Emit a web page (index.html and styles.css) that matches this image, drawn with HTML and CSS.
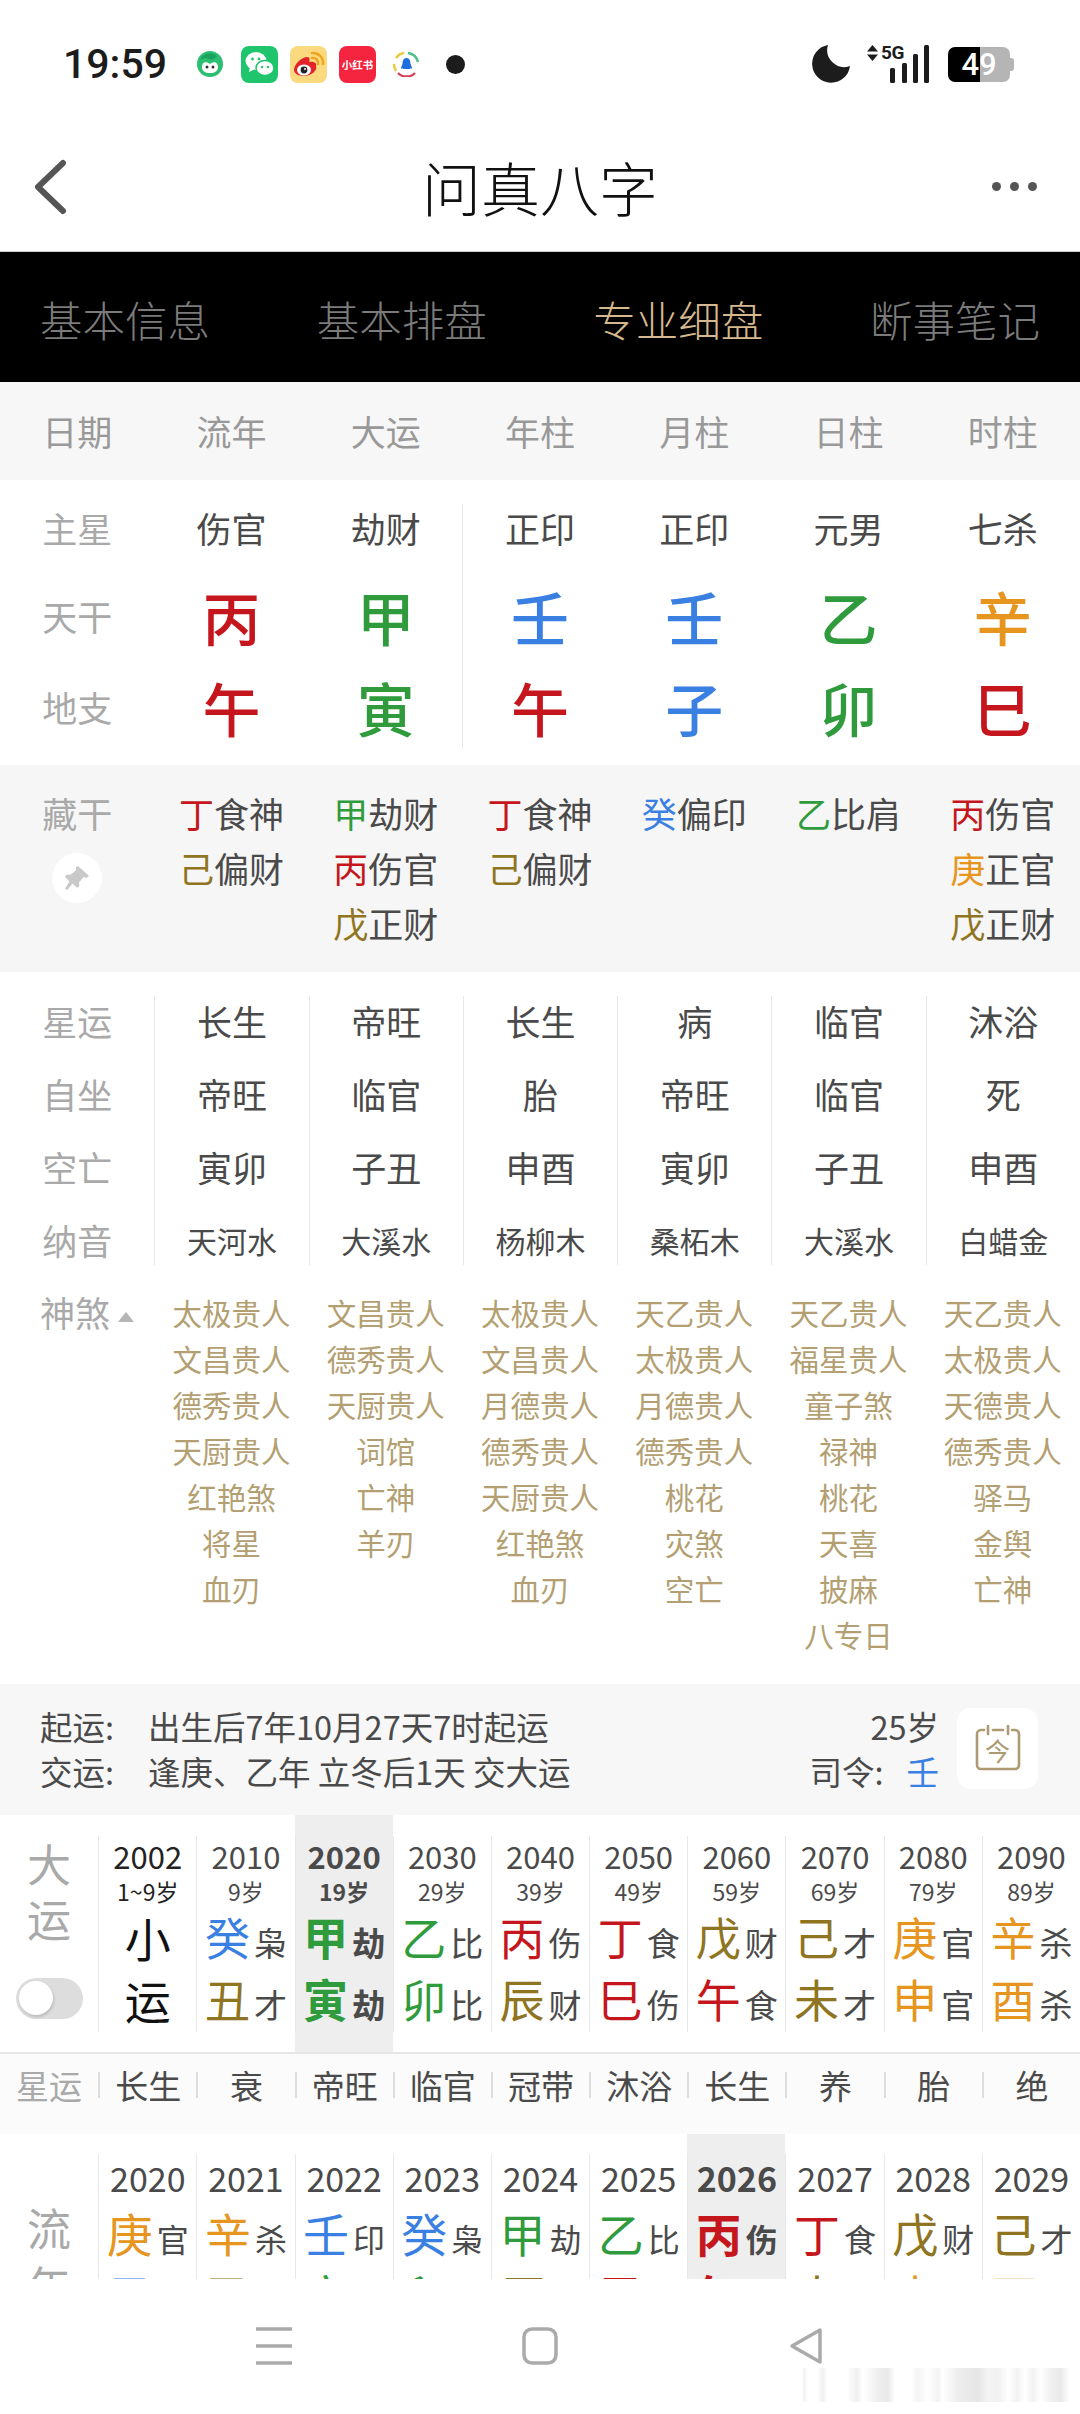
FILE: index.html
```html
<!DOCTYPE html>
<html>
	<head>
		<meta http-equiv="Content-Type" content="text/html; charset=UTF-8" />
		<meta name="viewport" content="initial-scale=1.0">
		<title>问真八字</title>
		<link rel="stylesheet" href="styles.css">
	</head>
	<body>
		<div class="status-bar">
			<span class="status-time">19:59</span>
			<div class="status-apps">
				<svg class="app-s" viewBox="0 0 26 26"><circle cx="13" cy="13" r="13" fill="#2cbf72"/><path d="M3 9a10.500 10.500 0 0 1 17-4c-2 3-5 4-8 3-3-1-6-1-9 1z" fill="#1aa35f"/><path d="M5 16c0-5 4-6 8-3 4-3 8-2 8 3 0 4-3 6-8 6s-8-2-8-6z" fill="#fff"/><circle cx="10" cy="16" r="1.500" fill="#333"/><circle cx="16" cy="16" r="1.500" fill="#333"/></svg>
				<svg class="app-b" viewBox="0 0 37 37"><rect width="37" height="37" rx="8" fill="#1fc56c"/><ellipse cx="15" cy="15" rx="10.500" ry="9" fill="#fff"/><path d="M9 21l-1 5 6-3z" fill="#fff"/><ellipse cx="24" cy="22" rx="9" ry="7.500" fill="#fff" stroke="#1fc56c" stroke-width="1.500"/><circle cx="11.500" cy="13" r="1.400" fill="#1fc56c"/><circle cx="18" cy="13" r="1.400" fill="#1fc56c"/><circle cx="21" cy="21" r="1.200" fill="#1fc56c"/><circle cx="27" cy="21" r="1.200" fill="#1fc56c"/></svg>
				<svg class="app-b" viewBox="0 0 37 37"><rect width="37" height="37" rx="8" fill="#fbd97f"/><path d="M22 7a10 10 0 0 1 11 11M22 12a5 5 0 0 1 6 6" fill="none" stroke="#f0a41e" stroke-width="2.400" stroke-linecap="round"/><path d="M4 24c0-6 8-13 13-13 3 0 3 3 2 5 5-1 8 1 7 4 2 5-6 10-12 10-6 0-10-3-10-6z" fill="#e4242b"/><ellipse cx="14" cy="24" rx="7" ry="5.500" fill="#fff"/><circle cx="14" cy="24" r="3.400" fill="#222"/><circle cx="15" cy="23" r="1" fill="#fff"/></svg>
				<div class="app-red">小红书</div>
				<svg class="app-s app-news" viewBox="0 0 29 26"><path d="M4 7a12 12 0 0 1 8-5" fill="none" stroke="#e9c93c" stroke-width="2.400"/><path d="M2 13a12 12 0 0 0 2 7" fill="none" stroke="#e9c93c" stroke-width="2.400"/><path d="M16 2a12 12 0 0 1 10 9" fill="none" stroke="#4fc08d" stroke-width="2.400"/><path d="M6 22a12 12 0 0 0 17 0" fill="none" stroke="#d8405a" stroke-width="2.400"/><path d="M14.500 7c3 0 4 3 4 6 1 2 2 4 1 5-1-1-1-1-2 0h-6c-1-1-1-1-2 0-1-1 0-3 1-5 0-3 1-6 4-6z" fill="#1d6fe0"/></svg>
				<span class="status-dot"></span>
			</div>
			<div class="status-right">
				<svg class="ico-moon" viewBox="0 0 38 38"><path d="M16 0A19 19 0 1 0 38 21 17 17 0 0 1 16 0Z" fill="#1c1c1c"/></svg>
				<div class="signal">
					<svg class="signal-arrows" viewBox="0 0 11 16"><path d="M5.500 0L11 6.500H0zM5.500 16L0 9.500H11z" fill="#1c1c1c"/></svg>
					<span class="signal-5g">5G</span>
					<svg class="signal-bars" viewBox="0 0 40 38"><rect x="0" y="23" width="5" height="15" rx="1.500"/><rect x="12" y="18" width="5" height="20" rx="1.500"/><rect x="23" y="9" width="5" height="29" rx="1.500"/><rect x="34" y="0" width="5" height="38" rx="1.500"/></svg>
				</div>
				<div class="battery">49</div>
			</div>
		</div>

		<div class="title-bar">
			<svg class="ico-back" viewBox="0 0 34 56"><path d="M30 4L5 28 30 52" fill="none" stroke="#555" stroke-width="6" stroke-linecap="round" stroke-linejoin="round"/></svg>
			<span class="title-txt">问真八字</span>
			<div class="title-more"><i></i><i></i><i></i></div>
		</div>

		<div class="tab-bar">
			<span>基本信息</span>
			<span>基本排盘</span>
			<span class="tab-on">专业细盘</span>
			<span>断事笔记</span>
		</div>

		<div class="cols head-row">
			<span>日期</span><span>流年</span><span>大运</span><span>年柱</span><span>月柱</span><span>日柱</span><span>时柱</span>
		</div>

		<div class="cols main-rows">
			<span class="lbl">主星</span><span>伤官</span><span>劫财</span><span>正印</span><span>正印</span><span>元男</span><span>七杀</span>
			<span class="lbl">天干</span><b class="fire">丙</b><b class="wood">甲</b><b class="water">壬</b><b class="water">壬</b><b class="wood">乙</b><b class="metal">辛</b>
			<span class="lbl">地支</span><b class="fire">午</b><b class="wood">寅</b><b class="fire">午</b><b class="water">子</b><b class="wood">卯</b><b class="fire">巳</b>
		</div>

		<div class="cols hide-rows">
			<div class="lbl">
				藏干
				<div class="pin-btn">
					<svg viewBox="0 0 24 24"><path d="M13 1l10 9-2 2-3-1-4 5 0 4-2 1-4-4-5 6-2-1 4-7-4-4 1-2 4 0 5-4 0-3z" fill="#c9c9c9"/></svg>
				</div>
			</div>
			<div><p><em class="fire">丁</em>食神</p><p><em class="earth">己</em>偏财</p></div>
			<div><p><em class="wood">甲</em>劫财</p><p><em class="fire">丙</em>伤官</p><p><em class="earth">戊</em>正财</p></div>
			<div><p><em class="fire">丁</em>食神</p><p><em class="earth">己</em>偏财</p></div>
			<div><p><em class="water">癸</em>偏印</p></div>
			<div><p><em class="wood">乙</em>比肩</p></div>
			<div><p><em class="fire">丙</em>伤官</p><p><em class="metal">庚</em>正官</p><p><em class="earth">戊</em>正财</p></div>
		</div>

		<div class="cols star-rows">
			<div class="lbl"><p>星运</p><p>自坐</p><p>空亡</p><p>纳音</p></div>
			<div class="star-col"><p>长生</p><p>帝旺</p><p>寅卯</p><p class="nayin">天河水</p></div>
			<div class="star-col"><p>帝旺</p><p>临官</p><p>子丑</p><p class="nayin">大溪水</p></div>
			<div class="star-col"><p>长生</p><p>胎</p><p>申酉</p><p class="nayin">杨柳木</p></div>
			<div class="star-col"><p>病</p><p>帝旺</p><p>寅卯</p><p class="nayin">桑柘木</p></div>
			<div class="star-col"><p>临官</p><p>临官</p><p>子丑</p><p class="nayin">大溪水</p></div>
			<div class="star-col"><p>沐浴</p><p>死</p><p>申酉</p><p class="nayin">白蜡金</p></div>
		</div>

		<div class="cols sha-rows">
			<div class="lbl sha-lbl">神煞<i class="sha-up"></i></div>
			<div><p>太极贵人</p><p>文昌贵人</p><p>德秀贵人</p><p>天厨贵人</p><p>红艳煞</p><p>将星</p><p>血刃</p></div>
			<div><p>文昌贵人</p><p>德秀贵人</p><p>天厨贵人</p><p>词馆</p><p>亡神</p><p>羊刃</p></div>
			<div><p>太极贵人</p><p>文昌贵人</p><p>月德贵人</p><p>德秀贵人</p><p>天厨贵人</p><p>红艳煞</p><p>血刃</p></div>
			<div><p>天乙贵人</p><p>太极贵人</p><p>月德贵人</p><p>德秀贵人</p><p>桃花</p><p>灾煞</p><p>空亡</p></div>
			<div><p>天乙贵人</p><p>福星贵人</p><p>童子煞</p><p>禄神</p><p>桃花</p><p>天喜</p><p>披麻</p><p>八专日</p></div>
			<div><p>天乙贵人</p><p>太极贵人</p><p>天德贵人</p><p>德秀贵人</p><p>驿马</p><p>金舆</p><p>亡神</p></div>
		</div>

		<div class="yun-info">
			<div class="yun-info-left">
				<p><span class="yun-key">起运:</span>出生后7年10月27天7时起运</p>
				<p><span class="yun-key">交运:</span>逢庚、乙年 立冬后1天 交大运</p>
			</div>
			<div class="yun-info-right">
				<p>25岁</p>
				<p>司令:<span class="water siling">壬</span></p>
			</div>
			<div class="today-btn">
				<svg viewBox="0 0 46 46"><path d="M9 5H6a4 4 0 0 0-4 4v31a4 4 0 0 0 4 4h34a4 4 0 0 0 4-4V9a4 4 0 0 0-4-4h-3M18 5h10M13 1v8M33 1v8" fill="none" stroke="#ad9a72" stroke-width="2.600" stroke-linecap="round"/></svg>
				<span class="today-txt">今</span>
			</div>
		</div>

		<div class="yun-table">
			<div class="yun-col">
				<div class="yun-side">
					<span>大</span><span>运</span>
					<div class="toggle"><i></i></div>
				</div>
			</div>
			<div class="yun-col"><div class="yun-in"><div class="yr yr-first">2002</div><div class="age yr-first">1~9岁</div><div class="gz gz-first">小</div><div class="gz gz-first">运</div></div></div>
			<div class="yun-col"><div class="yun-in"><div class="yr">2010</div><div class="age">9岁</div><div class="gz"><em class="water">癸</em><small>枭</small></div><div class="gz"><em class="earth">丑</em><small>才</small></div></div></div>
			<div class="yun-col col-on"><div class="yun-in"><div class="yr">2020</div><div class="age">19岁</div><div class="gz"><em class="wood">甲</em><small>劫</small></div><div class="gz"><em class="wood">寅</em><small>劫</small></div></div></div>
			<div class="yun-col"><div class="yun-in"><div class="yr">2030</div><div class="age">29岁</div><div class="gz"><em class="wood">乙</em><small>比</small></div><div class="gz"><em class="wood">卯</em><small>比</small></div></div></div>
			<div class="yun-col"><div class="yun-in"><div class="yr">2040</div><div class="age">39岁</div><div class="gz"><em class="fire">丙</em><small>伤</small></div><div class="gz"><em class="earth">辰</em><small>财</small></div></div></div>
			<div class="yun-col"><div class="yun-in"><div class="yr">2050</div><div class="age">49岁</div><div class="gz"><em class="fire">丁</em><small>食</small></div><div class="gz"><em class="fire">巳</em><small>伤</small></div></div></div>
			<div class="yun-col"><div class="yun-in"><div class="yr">2060</div><div class="age">59岁</div><div class="gz"><em class="earth">戊</em><small>财</small></div><div class="gz"><em class="fire">午</em><small>食</small></div></div></div>
			<div class="yun-col"><div class="yun-in"><div class="yr">2070</div><div class="age">69岁</div><div class="gz"><em class="earth">己</em><small>才</small></div><div class="gz"><em class="earth">未</em><small>才</small></div></div></div>
			<div class="yun-col"><div class="yun-in"><div class="yr">2080</div><div class="age">79岁</div><div class="gz"><em class="metal">庚</em><small>官</small></div><div class="gz"><em class="metal">申</em><small>官</small></div></div></div>
			<div class="yun-col"><div class="yun-in"><div class="yr">2090</div><div class="age">89岁</div><div class="gz"><em class="metal">辛</em><small>杀</small></div><div class="gz"><em class="metal">酉</em><small>杀</small></div></div></div>
		</div>

		<div class="yun-strip">
			<span class="strip-lbl">星运</span><span>长生</span><span>衰</span><span>帝旺</span><span>临官</span><span>冠带</span><span>沐浴</span><span>长生</span><span>养</span><span>胎</span><span>绝</span>
		</div>

		<div class="yun-table year-table">
			<div class="yun-col">
				<div class="yun-side year-side"><span>流</span><span>年</span></div>
			</div>
			<div class="yun-col"><div class="yun-in"><div class="yr">2020</div><div class="gz"><em class="metal">庚</em><small>官</small></div><div class="gz"><em class="water">子</em><small>枭</small></div></div></div>
			<div class="yun-col"><div class="yun-in"><div class="yr">2021</div><div class="gz"><em class="metal">辛</em><small>杀</small></div><div class="gz"><em class="earth">丑</em><small>才</small></div></div></div>
			<div class="yun-col"><div class="yun-in"><div class="yr">2022</div><div class="gz"><em class="water">壬</em><small>印</small></div><div class="gz"><em class="wood">寅</em><small>劫</small></div></div></div>
			<div class="yun-col"><div class="yun-in"><div class="yr">2023</div><div class="gz"><em class="water">癸</em><small>枭</small></div><div class="gz"><em class="wood">卯</em><small>比</small></div></div></div>
			<div class="yun-col"><div class="yun-in"><div class="yr">2024</div><div class="gz"><em class="wood">甲</em><small>劫</small></div><div class="gz"><em class="earth">辰</em><small>财</small></div></div></div>
			<div class="yun-col"><div class="yun-in"><div class="yr">2025</div><div class="gz"><em class="wood">乙</em><small>比</small></div><div class="gz"><em class="fire">巳</em><small>伤</small></div></div></div>
			<div class="yun-col col-on"><div class="yun-in"><div class="yr">2026</div><div class="gz"><em class="fire">丙</em><small>伤</small></div><div class="gz"><em class="fire">午</em><small>食</small></div></div></div>
			<div class="yun-col"><div class="yun-in"><div class="yr">2027</div><div class="gz"><em class="fire">丁</em><small>食</small></div><div class="gz"><em class="earth">未</em><small>才</small></div></div></div>
			<div class="yun-col"><div class="yun-in"><div class="yr">2028</div><div class="gz"><em class="earth">戊</em><small>财</small></div><div class="gz"><em class="metal">申</em><small>官</small></div></div></div>
			<div class="yun-col"><div class="yun-in"><div class="yr">2029</div><div class="gz"><em class="earth">己</em><small>才</small></div><div class="gz"><em class="metal">酉</em><small>杀</small></div></div></div>
		</div>

		<div class="nav-bar">
			<svg viewBox="0 0 38 38"><path d="M1 2H37M1 19H37M1 36H37" stroke="#aaa" stroke-width="3.500" fill="none"/></svg>
			<svg viewBox="0 0 38 38"><rect x="3" y="2" width="32" height="34" rx="8" fill="none" stroke="#aaa" stroke-width="3.500"/></svg>
			<svg viewBox="0 0 38 38"><path d="M32 3L4 19 32 35Z" fill="none" stroke="#aaa" stroke-width="3.500" stroke-linejoin="round"/></svg>
			<div class="nav-smudge"></div>
		</div>
	</body>
</html>
```

FILE: styles.css
```css
html, body { margin: 0; padding: 0; }
body {
	width: 1080px;
	height: 2414px;
	overflow: hidden;
	background-color: white;
	font: 35px/1.2 "Noto Sans CJK SC", sans-serif;
	color: #4a4a4a;
}
p { margin: 0; }
em, i { font-style: normal; }

.fire  { color: #c4161c; }
.wood  { color: #2f9b3c; }
.water { color: #3a80e2; }
.metal { color: #e6951f; }
.earth { color: #8f7421; }

/* status bar */
.status-bar {
	display: flex;
	align-items: center;
	height: 120px;
	padding: 4px 0 0 63px;
	box-sizing: content-box;
}
.status-time {
	width: 134px;
	font: 500 41px Roboto, sans-serif;
	color: #1c1c1c;
}
.status-apps {
	display: flex;
	align-items: center;
}
.app-s { width: 26px; height: 26px; margin-right: 18px; }
.app-b { width: 37px; height: 37px; margin-right: 12px; }
.app-news { width: 29px; margin: 0 25px 0 4px; }
.app-red {
	width: 37px;
	height: 37px;
	margin-right: 12px;
	border-radius: 8px;
	background-color: #f5253f;
	color: white;
	font-size: 10.500px;
	font-weight: bold;
	line-height: 37px;
	text-align: center;
	white-space: nowrap;
}
.status-dot {
	width: 19px;
	height: 19px;
	border-radius: 50%;
	background-color: #1c1c1c;
}
.status-right {
	display: flex;
	align-items: center;
	margin-left: auto;
	padding-right: 70px;
}
.ico-moon { width: 38px; height: 38px; margin-right: 17px; }
.signal {
	position: relative;
	width: 63px;
	height: 38px;
	margin-right: 18px;
}
.signal-arrows { position: absolute; left: 0; top: 0; width: 11px; height: 16px; }
.signal-5g {
	position: absolute;
	left: 14px;
	top: -3px;
	font: bold 19px/22px Roboto, sans-serif;
	letter-spacing: -0.500px;
	color: #1c1c1c;
}
.signal-bars { position: absolute; right: 0; top: 0; width: 40px; height: 38px; fill: #1c1c1c; }
.battery {
	position: relative;
	width: 62px;
	height: 35px;
	border-radius: 7px;
	background: linear-gradient(to right, #000 32px, #b5b5b5 32px);
	color: white;
	font: 500 31px/35px Roboto, sans-serif;
	text-align: center;
}
.battery::after {
	content: "";
	position: absolute;
	left: 62px;
	top: 11px;
	width: 4px;
	height: 13px;
	border-radius: 0 3px 3px 0;
	background-color: #b5b5b5;
}

/* title */
.title-bar {
	display: flex;
	align-items: center;
	justify-content: center;
	position: relative;
	height: 127px;
	border-bottom: 1px solid #ccc;
}
.ico-back { position: absolute; left: 33px; top: 35px; width: 34px; height: 56px; }
.title-txt {
	font-size: 59px;
	font-weight: 300;
	color: #111;
}
.title-more {
	position: absolute;
	right: 43px;
	top: 58px;
	display: flex;
	gap: 9px;
}
.title-more i {
	width: 9px;
	height: 9px;
	border-radius: 50%;
	background-color: #555;
}

.tab-bar {
	display: flex;
	align-items: center;
	justify-content: space-between;
	height: 130px;
	padding: 2px 40px 0;
	box-sizing: border-box;
	background-color: black;
	color: #7b7b7b;
	font-size: 42.500px;
	font-weight: 300;
}
.tab-on { color: #d5b88d; }

/* pillars */
.cols {
	display: grid;
	grid-template-columns: repeat(7, 1fr);
	text-align: center;
}
.lbl { color: #a9a9a9; }

.head-row {
	align-items: center;
	height: 98px;
	background-color: #f7f7f7;
	color: #999;
}

.main-rows {
	position: relative;
	grid-template-rows: 88px 87px 96px;
	align-items: center;
	height: 285px;
	padding-top: 4px;
	box-sizing: border-box;
}
.main-rows::after {
	content: "";
	position: absolute;
	left: 462px;
	top: 24px;
	bottom: 16px;
	border-left: 1px solid #e8e8e8;
}
.main-rows b {
	font-size: 58px;
	font-weight: 500;
	line-height: 70px;
}

.hide-rows {
	height: 207px;
	padding-top: 20px;
	box-sizing: border-box;
	background-color: #f6f6f6;
	line-height: 55px;
}
.pin-btn {
	width: 50px;
	height: 50px;
	margin: 13px auto 0;
	border-radius: 50%;
	background-color: white;
	display: flex;
	align-items: center;
	justify-content: center;
}
.pin-btn svg { width: 26px; height: 26px; }

.star-rows {
	padding-top: 24px;
	line-height: 50px;
}
.star-rows p + p { margin-top: 23px; }
.star-col { border-left: 1px solid #e8e8e8; }
.nayin { font-size: 30px; }

.sha-rows {
	padding: 24px 0 27px;
	line-height: 46px;
	font-size: 29.500px;
	color: #b39f72;
}
.sha-lbl {
	font-size: 35px;
	text-align: left;
	padding-left: 40px;
	color: #a9a9a9;
}
.sha-up {
	display: inline-block;
	margin-left: 8px;
	vertical-align: 5px;
	border: 8px solid transparent;
	border-top-width: 0;
	border-bottom: 10px solid #b5b5b5;
}

/* yun info */
.yun-info {
	display: flex;
	align-items: flex-start;
	height: 131px;
	padding: 19px 42px 0 40px;
	box-sizing: border-box;
	background-color: #f7f7f7;
	font-size: 32.500px;
	line-height: 45px;
}
.yun-key { display: inline-block; width: 108px; }
.yun-info-left { white-space: nowrap; }
.yun-info-right {
	margin-left: auto;
	text-align: right;
}
.siling { margin-left: 23px; }
.today-btn {
	position: relative;
	width: 81px;
	height: 81px;
	margin: 5px 0 0 18px;
	border-radius: 14px;
	background-color: white;
}
.today-btn svg { position: absolute; left: 18px; top: 17px; width: 46px; height: 46px; }
.today-txt {
	position: absolute;
	left: 0;
	right: 0;
	top: 27px;
	font-size: 25px;
	line-height: 30px;
	text-align: center;
	color: #ad9a72;
}

/* da yun / liu nian */
.yun-table {
	display: grid;
	grid-template-columns: repeat(11, 1fr);
	height: 237px;
	overflow: hidden;
	text-align: center;
}
.yun-col { padding-top: 21px; }
.yun-in {
	height: 196px;
	border-left: 1px solid #e8e8e8;
}
.col-on { background-color: #eee; }
.yr { font-size: 31px; line-height: 40px; }
.age { font-size: 23px; line-height: 30px; }
.yr-first { color: #222; }
.gz {
	height: 62px;
	line-height: 62px;
	white-space: nowrap;
}
.gz em { font-size: 45px; }
.gz small { font-size: 33px; margin-left: 4px; }
.gz-first { font-size: 46px; color: #111; }
.col-on .yr, .col-on .age, .col-on .gz em, .col-on .gz small { font-weight: bold; }

.yun-side {
	display: flex;
	flex-direction: column;
	align-items: center;
	color: #a9a9a9;
	font-size: 44px;
	line-height: 55px;
}
.toggle {
	position: relative;
	width: 67px;
	height: 41px;
	margin-top: 32px;
	border-radius: 21px;
	background-color: #ddd;
}
.toggle i {
	position: absolute;
	left: 3px;
	top: 3px;
	width: 34px;
	height: 34px;
	border-radius: 50%;
	background-color: white;
	box-shadow: 1px 2px 3px #bbb;
}

.yun-strip {
	display: grid;
	grid-template-columns: repeat(11, 1fr);
	height: 82px;
	padding-top: 18px;
	box-sizing: border-box;
	border-top: 2px solid #e6e6e6;
	background-color: #fbfbfb;
	font-size: 33px;
	line-height: 26px;
	text-align: center;
}
.yun-strip span {
	height: 26px;
	border-left: 2px solid #ddd;
}
.yun-strip .strip-lbl {
	border-left: 0;
	color: #a9a9a9;
}

.year-table { height: 145px; }
.year-table .yun-col { padding-top: 20px; }
.year-table .yr { font-size: 34px; line-height: 47px; }
.year-table .gz em { font-size: 46px; }
.year-table .gz small { font-size: 32px; }
.year-side { padding-top: 44px; line-height: 58px; }

/* nav */
.nav-bar {
	position: relative;
	display: grid;
	grid-template-columns: repeat(3, 266.500px);
	justify-content: center;
	justify-items: center;
	padding-top: 48px;
}
.nav-bar svg { width: 38px; height: 38px; }
.nav-smudge {
	position: absolute;
	left: 803px;
	top: 89px;
	width: 267px;
	height: 34px;
	background: linear-gradient(to right,
		#f0f0f0 0, #fff 5px, #fff 14px, #f0f0f0 20px, #fff 24px,
		#fff 44px, #efefef 54px, #fff 60px, #eee 75px, #e9e9e9 85px, #fff 92px,
		#fff 108px, #f4f4f4 115px, #fff 124px, #f3f3f3 135px, #fff 140px,
		#ededed 155px, #e6e6e6 175px, #f4f4f4 185px, #f0f0f0 195px, #fff 205px,
		#f2f2f2 214px, #fff 222px, #f2f2f2 230px, #fff 238px,
		#f0f0f0 248px, #eaeaea 258px, #fff 267px);
}
```
